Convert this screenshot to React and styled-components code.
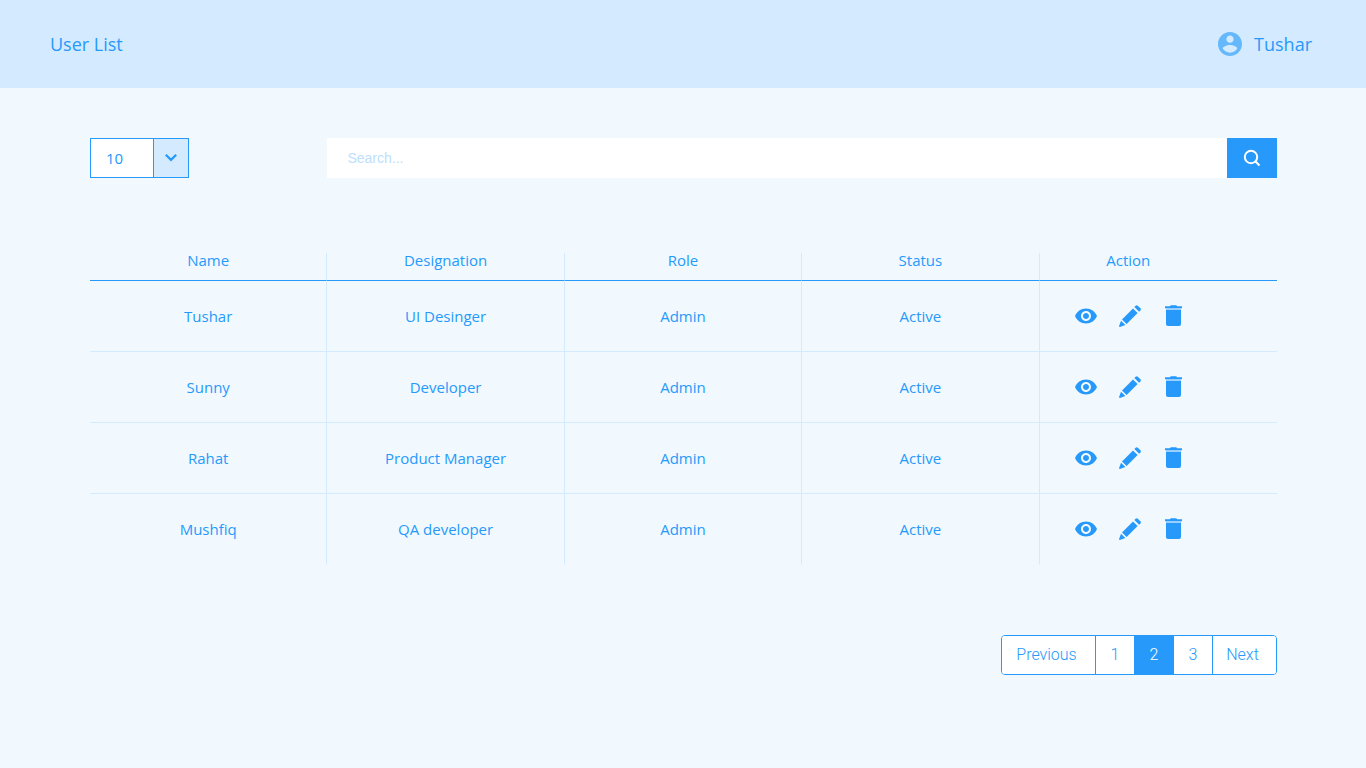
import React, { useState } from "react";
import styled, { createGlobalStyle } from "styled-components";

const blue = "#2699fb";
const paleBlue = "#d4eaff";

const GlobalStyle = createGlobalStyle`
  *, *::before, *::after { box-sizing: border-box; }
  body {
    margin: 0;
    background: #f1f9ff;
    color: ${blue};
    font-family: "Segoe UI", "Open Sans", "Noto Sans", sans-serif;
    font-size: 15px;
    line-height: 20px;
  }
  button, input, select { font: inherit; color: inherit; }
`;

const Header = styled.header`
  display: flex;
  align-items: center;
  justify-content: space-between;
  height: 88px;
  padding: 0 54px 0 50px;
  background: ${paleBlue};
`;

const Title = styled.h1`
  margin: 0;
  font-size: 18px;
  font-weight: 400;
  line-height: 24px;
`;

const Account = styled.a`
  display: flex;
  align-items: center;
  gap: 12px;
  color: inherit;
  font-size: 18px;
  line-height: 24px;
  text-decoration: none;
`;

const Main = styled.main`
  padding: 50px 89px 50px 90px;
`;

const Toolbar = styled.div`
  display: grid;
  grid-template-columns: 1fr 4fr;
  height: 40px;
`;

const PageSize = styled.label`
  display: grid;
  grid-template-columns: 62px 35px;
  width: 99px;
  border: 1px solid ${blue};
  background: #fff;

  select {
    grid-area: 1 / 1 / 2 / 3;
    appearance: none;
    padding: 0 15px;
    border: 0;
    background: transparent;
    cursor: pointer;
  }
`;

const Arrow = styled.span`
  grid-area: 1 / 2 / 2 / 3;
  display: flex;
  align-items: center;
  justify-content: center;
  border-left: 1px solid ${blue};
  background: ${paleBlue};
  pointer-events: none;
`;

const Search = styled.form`
  display: flex;

  input {
    flex: 1;
    min-width: 0;
    padding: 0 20px;
    border: 0;
    border-radius: 0;
    background: #fff;
    font-family: "Liberation Sans", Arial, sans-serif;
    font-size: 14px;
  }
  input::placeholder { color: #bce0fd; opacity: 1; }
`;

const SearchButton = styled.button`
  display: flex;
  align-items: center;
  justify-content: center;
  width: 50px;
  padding: 0;
  border: 0;
  background: ${blue};
  color: #fff;
  cursor: pointer;
`;

const Table = styled.table`
  width: 100%;
  margin-top: 75px;
  border-collapse: separate;
  border-spacing: 0;
  table-layout: fixed;
  text-align: center;
`;

const HeadCell = styled.th`
  height: 28px;
  padding: 0;
  padding-right: ${(p) => (p.$actions ? "60px" : "0")};
  border-right: ${(p) => (p.$actions ? "0" : `1px solid ${paleBlue}`)};
  border-bottom: 1px solid ${blue};
  font-weight: 400;
  line-height: 14px;
  vertical-align: top;
`;

const Cell = styled.td`
  height: 71px;
  padding: 0;
  border-right: 1px solid ${paleBlue};
  border-bottom: 1px solid ${paleBlue};

  &:last-child { padding-right: 56px; border-right: 0; }
  tr:last-child > & { border-bottom-color: transparent; }
`;

const Actions = styled.div`
  display: flex;
  justify-content: center;
  gap: 20px;
`;

const IconButton = styled.button`
  display: flex;
  padding: 0;
  border: 0;
  background: none;
  cursor: pointer;
`;

const Footer = styled.div`
  display: flex;
  justify-content: flex-end;
  margin-top: 70px;
`;

const Pagination = styled.nav`
  display: flex;
  height: 40px;
  overflow: hidden;
  border: 1px solid ${blue};
  border-radius: 4px;
  background: #fff;
`;

const PageButton = styled.button`
  width: ${(p) => p.$width || 39}px;
  padding: ${(p) => (p.$width ? "0 4px 0 0" : "0")};
  border: 0;
  border-right: 1px solid ${blue};
  background: ${(p) => (p.$active ? blue : "#fff")};
  color: ${(p) => (p.$active ? "#fff" : blue)};
  font-family: "Helvetica Neue", Roboto, sans-serif;
  font-size: 16px;
  font-weight: 300;
  cursor: pointer;

  &:last-child { border-right: 0; }
`;

const UserIcon = () => (
  <svg width="24" height="24" viewBox="2 2 20 20" fill="#66b8fc" aria-hidden="true">
    <path d="M12 2C6.48 2 2 6.48 2 12s4.480 10 10 10 10-4.480 10-10S17.520 2 12 2zm0 3c1.660 0 3 1.340 3 3s-1.340 3-3 3-3-1.340-3-3 1.340-3 3-3zm0 14.200c-2.500 0-4.710-1.280-6-3.220.030-1.990 4-3.080 6-3.080 1.990 0 5.970 1.090 6 3.080-1.290 1.940-3.500 3.220-6 3.220z" />
  </svg>
);

const ChevronIcon = () => (
  <svg width="14" height="10" viewBox="0 0 14 10" fill="none" stroke={blue} strokeWidth="2.200" aria-hidden="true">
    <path d="M1.800 1.700 7 6.900l5.200-5.200" />
  </svg>
);

const SearchIcon = () => (
  <svg width="18" height="18" viewBox="0 0 18 18" fill="none" stroke="currentColor" strokeWidth="2" aria-hidden="true">
    <circle cx="8" cy="8" r="6.200" />
    <path d="m12.300 12.300 4.200 4.200" />
  </svg>
);

const EyeIcon = () => (
  <svg width="24" height="24" viewBox="0 0 24 24" fill={blue} aria-hidden="true">
    <path d="M12 4.500C7 4.500 2.730 7.610 1 12c1.730 4.390 6 7.500 11 7.500s9.270-3.110 11-7.500c-1.730-4.390-6-7.500-11-7.500zM12 17c-2.760 0-5-2.240-5-5s2.240-5 5-5 5 2.240 5 5-2.240 5-5 5zm0-8c-1.660 0-3 1.340-3 3s1.340 3 3 3 3-1.340 3-3-1.340-3-3-3z" />
  </svg>
);

const PencilIcon = () => (
  <svg width="24" height="24" viewBox="0 0 24 24" fill={blue} aria-hidden="true">
    <path d="m16.400 3 1.200-1.300q1.100-1 2.200 0l2.600 2.600q1 1.100 0 2.200l-1.300 1.200z" />
    <path d="m15 4.400 4.600 4.600L8.600 20.100 4 15.500z" />
    <path d="m3 16.700 4.400 4.400-5.500 1.800q-1 .1-.8-.9z" />
  </svg>
);

const TrashIcon = () => (
  <svg width="24" height="24" viewBox="0 0 24 24" fill={blue} aria-hidden="true">
    <path d="M3 2.200h4.800l1-1h5.400l1 1H20v2H3z" />
    <path d="M4 5.700h15V20q0 2-2 2H6q-2 0-2-2z" />
    <path d="M4 4.200h15v1.500H4z" opacity=".3" />
  </svg>
);

const users = [
  { name: "Tushar", designation: "UI Desinger" },
  { name: "Sunny", designation: "Developer" },
  { name: "Rahat", designation: "Product Manager" },
  { name: "Mushfiq", designation: "QA developer" },
];

export default function App() {
  const [page, setPage] = useState(2);
  return (
    <>
      <GlobalStyle />
      <Header>
        <Title>User List</Title>
        <Account href="#account"><UserIcon />Tushar</Account>
      </Header>
      <Main>
        <Toolbar>
          <PageSize>
            <select aria-label="Rows per page" defaultValue="10">
              <option>10</option>
              <option>25</option>
              <option>50</option>
            </select>
            <Arrow><ChevronIcon /></Arrow>
          </PageSize>
          <Search role="search" onSubmit={(e) => e.preventDefault()}>
            <input type="search" aria-label="Search users" placeholder="Search..." />
            <SearchButton aria-label="Search"><SearchIcon /></SearchButton>
          </Search>
        </Toolbar>
        <Table>
          <thead>
            <tr>
              {["Name", "Designation", "Role", "Status"].map((h) => <HeadCell key={h} scope="col">{h}</HeadCell>)}
              <HeadCell scope="col" $actions>Action</HeadCell>
            </tr>
          </thead>
          <tbody>
            {users.map((u) => (
              <tr key={u.name}>
                <Cell>{u.name}</Cell>
                <Cell>{u.designation}</Cell>
                <Cell>Admin</Cell>
                <Cell>Active</Cell>
                <Cell>
                  <Actions>
                    <IconButton aria-label={`View ${u.name}`}><EyeIcon /></IconButton>
                    <IconButton aria-label={`Edit ${u.name}`}><PencilIcon /></IconButton>
                    <IconButton aria-label={`Delete ${u.name}`}><TrashIcon /></IconButton>
                  </Actions>
                </Cell>
              </tr>
            ))}
          </tbody>
        </Table>
        <Footer>
          <Pagination aria-label="Pages">
            <PageButton $width={94} onClick={() => setPage(Math.max(1, page - 1))}>Previous</PageButton>
            {[1, 2, 3].map((n) => (
              <PageButton key={n} $active={n === page} onClick={() => setPage(n)}>{n}</PageButton>
            ))}
            <PageButton $width={63} onClick={() => setPage(Math.min(3, page + 1))}>Next</PageButton>
          </Pagination>
        </Footer>
      </Main>
    </>
  );
}
